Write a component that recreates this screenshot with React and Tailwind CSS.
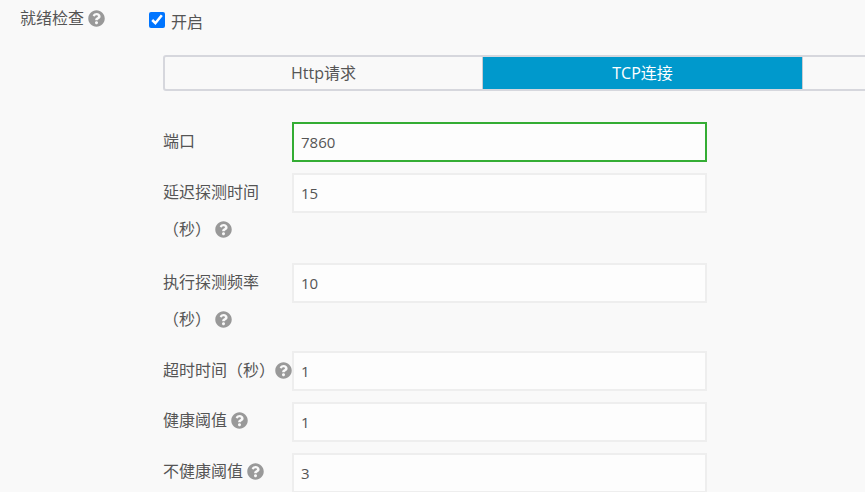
import { FaQuestionCircle } from "react-icons/fa"

function Help() {
  return <FaQuestionCircle className="inline-block shrink-0 text-[17px] text-[#999999]" />
}

function Field({ value, active, className = "", children }) {
  return (
    <div className={`flex items-start ${className}`}>
      <div className="w-[129px] shrink-0 text-[16px] leading-[37px] text-[#555555]">{children}</div>
      <input
        readOnly
        value={value}
        className={`h-10 w-[415px] border-2 bg-[#fdfdfd] px-[7px] text-[15px] text-[#555555] outline-none ${
          active ? "border-[#34ad34]" : "border-[#eeeeee]"
        }`}
      />
    </div>
  )
}

export default function App() {
  return (
    <div className="h-[492px] w-[865px] overflow-hidden bg-[#f9f9f9] font-['Open_Sans','Noto_Sans_CJK_SC',sans-serif]">
      <div className="flex h-[55px] items-start">
        <div className="flex w-[149px] shrink-0 items-center gap-1 pl-5 pt-[6px] text-[16px] leading-6 text-[#555555]">
          就绪检查 <Help />
        </div>
        <label className="flex items-center gap-[6px] pt-[10px] text-[16px] leading-6 text-[#555555]">
          <input type="checkbox" checked readOnly className="m-0 mb-1 h-4 w-4 accent-[#0075ff]" />
          开启
        </label>
      </div>

      <div className="ml-[163px] flex h-9 w-[760px] overflow-hidden rounded-[3px] border-2 border-[#d6d7dd] text-[16px]">
        <div className="flex w-[317px] items-center justify-center text-[#555555]">Http请求</div>
        <div className="flex w-[321px] items-center justify-center border-x border-[#c8ccd2] bg-[#0099cc] text-white">TCP连接</div>
        <div className="flex-1"></div>
      </div>

      <div className="ml-[163px] mt-[31px]">
        <Field value="7860" active className="h-[51px]">
          <div className="pt-px">端口</div>
        </Field>
        <Field value="15" className="h-[90px]">
          <div className="leading-[38px]">延迟探测时间</div>
          <div className="flex items-center gap-1 leading-[37px]">（秒） <Help /></div>
        </Field>
        <Field value="10" className="h-[88px]">
          <div className="leading-[38px]">执行探测频率</div>
          <div className="flex items-center gap-1 leading-[37px]">（秒） <Help /></div>
        </Field>
        <Field value="1" className="h-[51px]">
          <div className="flex items-center gap-1 pt-px">超时时间（秒） <Help /></div>
        </Field>
        <Field value="1" className="h-[51px]">
          <div className="flex items-center gap-1">健康阈值 <Help /></div>
        </Field>
        <Field value="3" className="h-[51px]">
          <div className="flex items-center gap-1">不健康阈值 <Help /></div>
        </Field>
      </div>
    </div>
  )
}
